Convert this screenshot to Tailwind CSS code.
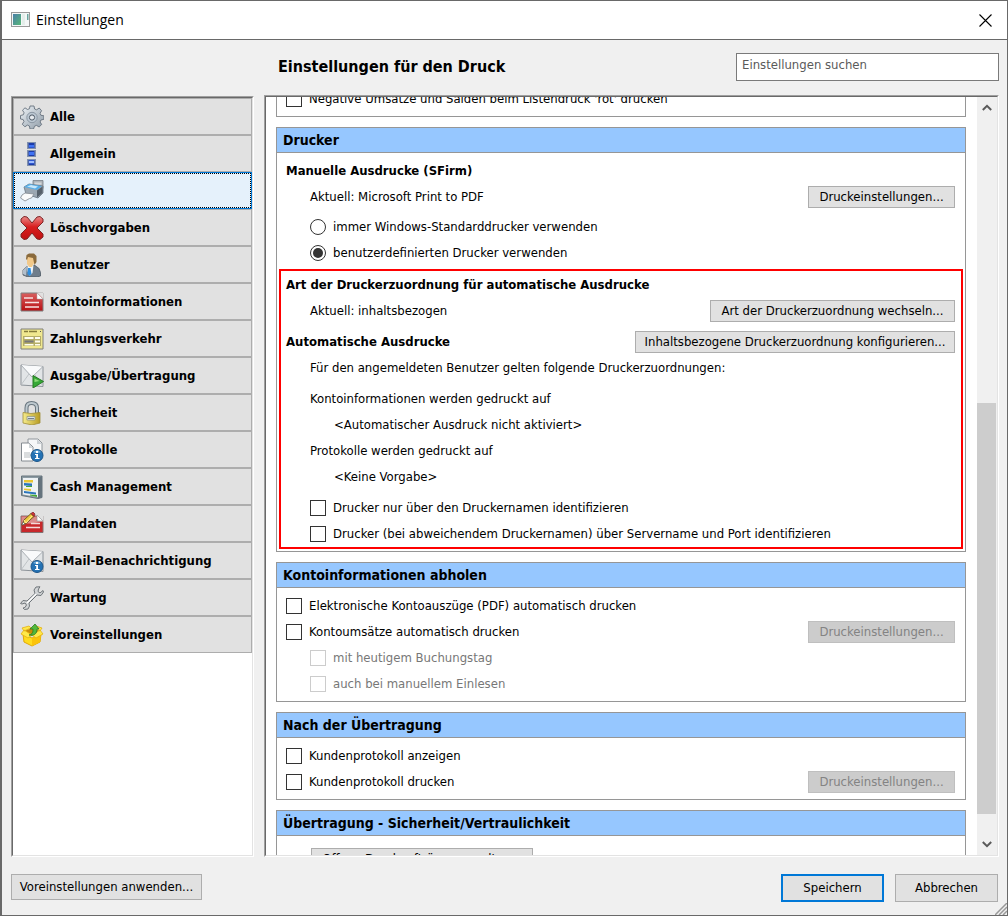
<!DOCTYPE html>
<html lang="de">
<head>
    <meta charset="UTF-8">
    <meta name="viewport" content="width=device-width, initial-scale=1.0">
    <script src="https://cdn.jsdelivr.net/npm/@tailwindcss/browser@4"></script>
    <title>Einstellungen</title>
</head>
<body class="h-screen bg-[#f0f0f0] font-['DejaVu_Sans_Condensed','DejaVu_Sans',sans-serif] text-[13px] text-black">
<div class="flex h-full flex-col overflow-hidden border border-[#696969] border-l-2 relative">

    <!-- Title bar -->
    <header class="flex h-[39px] shrink-0 items-center border-b border-[#696969] bg-white pl-[9px] pr-[15px]">
        <svg class="h-4 w-5" viewBox="0 0 20 16">
            <defs><linearGradient id="app" x2="1" y2="1"><stop stop-color="#4a7fa8"/><stop offset="1" stop-color="#58b878"/></linearGradient></defs>
            <rect x=".5" y=".5" width="18" height="14" fill="#f4f7f7" stroke="#9a9a9a"/>
            <rect x="2" y="2" width="8" height="11" fill="url(#app)"/>
            <path d="M11 2h3v11h-3z" fill="#e4eeea"/><path d="M16 2h1.500v6H16z" fill="#6aa6a0"/>
        </svg>
        <h1 class="ml-[5px] grow font-['Open_Sans',sans-serif] text-sm">Einstellungen</h1>
        <button type="button" aria-label="Schließen">
            <svg class="size-[13px]" viewBox="0 0 13 13"><path d="M.5.5l12 12m0-12l-12 12" stroke="#000" stroke-width="1.1"/></svg>
        </button>
    </header>

    <!-- Page title and search -->
    <div class="flex h-[55px] shrink-0 items-center pb-[2px] pl-[276px] pr-2">
        <h2 class="grow text-base font-bold">Einstellungen für den Druck</h2>
        <input type="search" aria-label="Einstellungen suchen" placeholder="Einstellungen suchen" class="h-7 w-[263px] border border-[#7a7a7a] bg-white pb-1 pl-[5px] placeholder:text-[#5a5a5a]">
    </div>

    <div class="flex min-h-0 grow gap-[10px] pl-[9px] pr-2">

        <!-- Categories -->
        <nav class="mt-px w-[243px] shrink-0 border border-t-[#a0a0a0] border-l-[#a0a0a0] border-r-white border-b-white">
            <div class="h-full border border-t-[#696969] border-l-[#696969] border-r-[#e3e3e3] border-b-[#e3e3e3] bg-white">
                <a href="#" class="flex h-[37px] items-center gap-[6px] border border-[#adadad] bg-[#e1e1e1] pl-[6px] font-bold">
                    <svg class="size-6" viewBox="0 0 24 24">
                        <defs><linearGradient id="gear" x2="1" y2="1"><stop stop-color="#eef3f7"/><stop offset="1" stop-color="#8d9aa6"/></linearGradient></defs>
                        <path d="M10 1h4l.6 3 2 .8 2.600-1.800 2.400 2.700-1.500 2.600.8 2 3 .5v3.500l-3 .7-.8 2 1.600 2.500-2.600 2.500-2.600-1.600-2 .8L13.500 24H10l-.6-3-2-.9-2.500 1.700-2.600-2.600L4 16.500l-.9-2L.5 14v-3.500l2.800-.7.8-2L2.500 5.200 5 2.800l2.500 1.700 2-.8z" fill="url(#gear)" stroke="#66727e" stroke-width=".9"/>
                        <circle cx="12" cy="12.500" r="5.200" fill="#bcc8d3" stroke="#8b97a3"/>
                        <circle cx="12" cy="12.500" r="2.600" fill="#e6eaee" stroke="#4f5a66"/>
                    </svg>Alle
                </a>
                <a href="#" class="flex h-[37px] items-center gap-[6px] border border-[#adadad] bg-[#e1e1e1] pl-[6px] font-bold">
                    <svg class="size-6" viewBox="0 0 24 24">
                        <path d="M7 0h9v7H7zM7 8h9v7H7zM7 17h9v7H7z" fill="#8090ae"/>
                        <path d="M8.500 1h6v5h-6zM8.500 9h6v5h-6zM8.500 18h6v5h-6z" fill="#1c3caa"/>
                        <path d="M9 3h5v2.500H9zM9 10h5v3H9zM9 18.500h5v3H9z" fill="#3f73f4"/>
                        <path d="M9 19h5v2H9z" fill="#9ebcff"/>
                    </svg>Allgemein
                </a>
                <a href="#" aria-current="page" class="flex h-[37px] border border-[#0078d7] bg-[#e5f1fb] font-bold">
                    <span class="flex grow items-center gap-[6px] border border-dotted border-black pl-[5px]">
                        <svg class="size-6" viewBox="0 0 24 24">
                            <path d="M13 1.500h10v8l-10 1z" fill="#aeb4ba" stroke="#777f87" stroke-width=".8"/>
                            <path d="M14.500 3.500h7v2l-7 .5z" fill="#d5d9dc"/>
                            <path d="M4 8l5-3 14 2v7l-5 5-12-4z" fill="#9ba7b2" stroke="#687480" stroke-width=".8"/>
                            <path d="M4 8l5-3 13 2-5 4z" fill="#57aee8"/>
                            <path d="M7 7.500l4-1.500 7 1.500-3 2z" fill="#c7e8fb"/>
                            <path d="M17 11.500l5.500-4V14L17 18.500z" fill="#56616c"/>
                            <path d="M5 14l9 1-2.500 4-2 .5L5 22l-4.500-3L2 16z" fill="#fafbfc" stroke="#8a9198" stroke-width=".9"/>
                        </svg>Drucken
                    </span>
                </a>
                <a href="#" class="flex h-[37px] items-center gap-[6px] border border-[#adadad] bg-[#e1e1e1] pl-[6px] font-bold">
                    <svg class="size-6" viewBox="0 0 24 24">
                        <defs><linearGradient id="cross" x2="0" y2="1"><stop stop-color="#e98a88"/><stop offset=".45" stop-color="#d81f20"/><stop offset="1" stop-color="#c01010"/></linearGradient></defs>
                        <path d="M1 3l3-2.500 3 .5 5 6 5-6 3-.5L23 3v3l-6 6 6 6v3l-3 2.500-3-.5-5-6-5 6-3 .5L1 21v-3l6-6-6-6z" fill="url(#cross)" stroke="#7d2426" stroke-linejoin="round"/>
                    </svg>Löschvorgaben
                </a>
                <a href="#" class="flex h-[37px] items-center gap-[6px] border border-[#adadad] bg-[#e1e1e1] pl-[6px] font-bold">
                    <svg class="size-6" viewBox="0 0 24 24">
                        <path d="M3 22v-5l4-3.500 4-1h4l4 3 1.500 4V23l-4 1H8z" fill="#6f7d8b" stroke="#4d5863" stroke-width=".8"/>
                        <path d="M3 21v-4l4-3.500-1 9z" fill="#b3bfcb"/>
                        <path d="M7.500 12h6l-1 8-3 3-2-5z" fill="#eef4f9"/>
                        <path d="M8 15h2.500l1 6-2 2-2-2z" fill="#2f8fe0"/>
                        <path d="M7 3h7v7l-2 4H9l-2-3z" fill="#f2c98a"/>
                        <path d="M6 6l.5-4L9 .5h5L16.500 3v6l-2 3L13 5l-5-1-1 3z" fill="#8a6a3c"/>
                    </svg>Benutzer
                </a>
                <a href="#" class="flex h-[37px] items-center gap-[6px] border border-[#adadad] bg-[#e1e1e1] pl-[6px] font-bold">
                    <svg class="size-6" viewBox="0 0 24 24">
                        <defs><linearGradient id="konto" x2="0" y2="1"><stop stop-color="#d96060"/><stop offset="1" stop-color="#b80e12"/></linearGradient></defs>
                        <path d="M1 3h22v18H1z" fill="url(#konto)" stroke="#7e7e7e"/>
                        <path d="M17 2.500h6.500V9z" fill="#e1e1e1"/><path d="M17 3v6h6z" fill="#fff" stroke="#aaa" stroke-width=".5"/>
                        <path d="M4 8h9M5 12.500h14M5 17h14" stroke="#f6e2e2" stroke-width="1.600"/>
                    </svg>Kontoinformationen
                </a>
                <a href="#" class="flex h-[37px] items-center gap-[6px] border border-[#adadad] bg-[#e1e1e1] pl-[6px] font-bold">
                    <svg class="size-6" viewBox="0 0 24 24">
                        <path d="M1 2h22v20H1z" fill="#f0e88f" stroke="#7e7e78"/>
                        <path d="M4 4.500h4M9 4.500h8" stroke="#857c3c" stroke-width="1.500"/><path d="M20 4.500h1" stroke="#555"/>
                        <path d="M3 9h18v10H3z" fill="#b5ad68"/>
                        <path d="M4.500 10h9v2h-9zM15 10h5v2h-5zM15 13.500h5v2h-5zM4.500 17h9v1.500h-9zM15 17h5v1.500h-5z" fill="#fffef0"/>
                        <path d="M4.500 14.500h9" stroke="#77777a" stroke-width="2"/>
                    </svg>Zahlungsverkehr
                </a>
                <a href="#" class="flex h-[37px] items-center gap-[6px] border border-[#adadad] bg-[#e1e1e1] pl-[6px] font-bold">
                    <svg class="size-6" viewBox="0 0 24 24">
                        <path d="M1 1l22 1.500v20L1 21z" fill="#e2e5e7" stroke="#8c9298"/>
                        <path d="M1 1l11 12L23 2.500" fill="#f9fafb" stroke="#979da3" stroke-width=".8"/>
                        <path d="M1 21l8-11M23 22l-8-11" stroke="#b5babe" stroke-width=".8"/>
                        <path d="M13 11.500l10.500 6L13 24z" fill="#36a936" stroke="#267a22"/>
                        <path d="M14.500 14.500l5 2.500-5 1z" fill="#90dc78"/>
                    </svg>Ausgabe/Übertragung
                </a>
                <a href="#" class="flex h-[37px] items-center gap-[6px] border border-[#adadad] bg-[#e1e1e1] pl-[6px] font-bold">
                    <svg class="size-6" viewBox="0 0 24 24">
                        <defs><linearGradient id="lock" x2="1"><stop stop-color="#f6ec8c"/><stop offset="1" stop-color="#b79c24"/></linearGradient></defs>
                        <path d="M6.500 13V7C6.500 3 9 2 11.500 2s5.500 1 5.500 5v7" fill="none" stroke="#68757e" stroke-width="4"/>
                        <path d="M6.500 13V7C6.500 3 9 2 11.500 2s5.500 1 5.500 5v7" fill="none" stroke="#bec9cf" stroke-width="2"/>
                        <path d="M3 11.500l8 1 9-1V22l-8 2-9-2z" fill="url(#lock)" stroke="#a08e38" stroke-width=".8"/>
                        <path d="M7 15.500h8v3.500H7z" fill="#dbe3e6" stroke="#959a82" stroke-width=".8"/><path d="M8 17.500h6" stroke="#72808b"/>
                    </svg>Sicherheit
                </a>
                <a href="#" class="flex h-[37px] items-center gap-[6px] border border-[#adadad] bg-[#e1e1e1] pl-[6px] font-bold">
                    <svg class="size-6" viewBox="0 0 24 24">
                        <path d="M8 1h10l4 4v13H8z" fill="#f6f7f8" stroke="#90969c"/><path d="M17 1v5h5z" fill="#ccd1d5"/>
                        <path d="M1.500 5H9l4 4v14H1.500z" fill="#fff" stroke="#858b91"/><path d="M9 5v5h4z" fill="#d2d7da"/>
                        <path d="M4 15h6m-6 2h7m-7 2h6" stroke="#b5babd"/>
                        <circle cx="17" cy="17.500" r="6" fill="#2472b4" stroke="#1b5588"/>
                        <path d="M13 14q4-3.500 8 0-3 2-8 0z" fill="#73b0dc"/>
                        <path d="M16 13h2v2h-2zM15 16h3v4h1.500v1H15v-1h1.200v-3H15z" fill="#fff"/>
                    </svg>Protokolle
                </a>
                <a href="#" class="flex h-[37px] items-center gap-[6px] border border-[#adadad] bg-[#e1e1e1] pl-[6px] font-bold">
                    <svg class="size-6" viewBox="0 0 24 24">
                        <path d="M1.500 1h20.500v21.500l-4 1-16.500-3z" fill="#8c9ba3" stroke="#66747c"/>
                        <path d="M3 3h15v19L3 19.500z" fill="#eef2f4"/>
                        <path d="M18 3l4-2v21.500l-4 1z" fill="#65737d"/>
                        <path d="M4 5h9v2.500H4z" fill="#e9c632"/><path d="M4 8l8 .5V11l-8-.5z" fill="#2a75bb"/>
                        <path d="M6 11h6v1H6z" fill="#45a735"/><path d="M4 13.500l7 .5v2l-7-1z" fill="#e9c632"/>
                        <path d="M4 16l12 1.500v2L4 18z" fill="#2a75bb"/><path d="M10 19.500l7 .5v2l-7-1.500z" fill="#45a735"/>
                    </svg>Cash Management
                </a>
                <a href="#" class="flex h-[37px] items-center gap-[6px] border border-[#adadad] bg-[#e1e1e1] pl-[6px] font-bold">
                    <svg class="size-6" viewBox="0 0 24 24">
                        <path d="M1 4h22v16.500H1z" fill="#c8282b" stroke="#827272"/>
                        <path d="M1.500 4.500H23v5l-12 2H1.500z" fill="#dc8b8b"/>
                        <path d="M16 3h7.500v7z" fill="#e1e1e1"/><path d="M17 3v6h6z" fill="#fff" stroke="#999" stroke-width=".7"/>
                        <path d="M11 11.500h9M6 15.500h14" stroke="#f4dada" stroke-width="1.500"/>
                        <path d="M2 13l2-5 7-6.500 3 3-8 7z" fill="#efc83e" stroke="#735d22"/>
                        <path d="M4 8l2 3 6-7" fill="none" stroke="#fff0a0"/>
                        <path d="M11 1.500L13 0l2 2-1 2.500z" fill="#d0363b" stroke="#762024" stroke-width=".7"/>
                        <path d="M2 13l1-3 2 2z" fill="#fff" stroke="#555" stroke-width=".6"/>
                    </svg>Plandaten
                </a>
                <a href="#" class="flex h-[37px] items-center gap-[6px] border border-[#adadad] bg-[#e1e1e1] pl-[6px] font-bold">
                    <svg class="size-6" viewBox="0 0 24 24">
                        <path d="M1 1l22 1.500v20L1 21z" fill="#e2e5e7" stroke="#8c9298"/>
                        <path d="M1 1l11 12L23 2.500" fill="#f9fafb" stroke="#979da3" stroke-width=".8"/>
                        <path d="M1 21l8-11M23 22l-8-11" stroke="#b5babe" stroke-width=".8"/>
                        <circle cx="17" cy="17.500" r="6" fill="#2472b4" stroke="#1b5588"/>
                        <path d="M13 14q4-3.500 8 0-3 2-8 0z" fill="#73b0dc"/>
                        <path d="M16 13h2v2h-2zM15 16h3v4h1.500v1H15v-1h1.200v-3H15z" fill="#fff"/>
                    </svg>E-Mail-Benachrichtigung
                </a>
                <a href="#" class="flex h-[37px] items-center gap-[6px] border border-[#adadad] bg-[#e1e1e1] pl-[6px] font-bold">
                    <svg class="size-6" viewBox="0 0 24 24">
                        <path d="M20 .8l-4 .2-2 3 1 3.500L7 15l-4-.5-2.500 3L2 18l3-1 1.500 2L5 21.500l-2 .5 1.500 1.500L8 23l1.500-3-.5-3 8-8 4 .5L23.500 6l-.5-1.500L20 7l-2-1.500L18.500 3z" fill="#d2d5d7" stroke="#6f757a" stroke-linejoin="round"/>
                        <path d="M7 17l9-9" stroke="#fff" stroke-width="1.200"/>
                    </svg>Wartung
                </a>
                <a href="#" class="flex h-[37px] items-center gap-[6px] border border-[#adadad] bg-[#e1e1e1] pl-[6px] font-bold">
                    <svg class="size-6" viewBox="0 0 24 24">
                        <path d="M3 11l9 4 9-4-1 8-8 4-8-4z" fill="#ffdc1e" stroke="#e0a808"/>
                        <path d="M12 15l9-4-1 8-8 4z" fill="#fbc30a"/>
                        <path d="M4 8l8-3 8 3-8 5z" fill="#c98c08"/>
                        <path d="M4 7L1 11l7 4 4-3zM20 7l3 4-7 4-4-3zM4 8L2 5l7-2 2 2zM20 8l2-3-6-2-2 2z" fill="#ffe94a" stroke="#e5b010" stroke-width=".8"/>
                        <path d="M9 12c4-1 4-3 4-6h-3l5-5 4 5h-2c0 5-3 7-8 6z" fill="#52b83c" stroke="#2b7c25" stroke-width=".8"/>
                    </svg>Voreinstellungen
                </a>
            </div>
        </nav>

        <!-- Settings of the chosen category -->
        <main class="flex min-w-0 grow border border-t-[#a0a0a0] border-l-[#a0a0a0] border-r-white border-b-white">
            <div class="flex min-w-0 grow border border-t-[#696969] border-l-[#696969] border-r-[#e3e3e3] border-b-[#e3e3e3] bg-white">
                <div class="min-w-0 grow overflow-hidden pl-[10px] pr-[11px]">
                    <div class="-mt-[11px] space-y-[10px]">

                        <section class="border border-t-0 border-[#969696] pb-1 pl-[9px]">
                            <label class="flex h-[26px] items-center gap-[7px]"><input type="checkbox" class="size-4 appearance-none border border-[#333] bg-white">Negative Umsätze und Salden beim Listendruck 'rot' drucken</label>
                        </section>

                        <section class="border border-[#969696]">
                            <h3 class="flex h-[25px] items-center border-b border-[#969696] bg-[#96c7ff] pl-[6px] text-sm font-bold">Drucker</h3>
                            <div class="pt-[5px] pr-[10px] pl-[9px]">
                                <h4 class="flex h-[26px] items-center font-bold">Manuelle Ausdrucke (SFirm)</h4>
                                <div class="flex h-[26px] items-center justify-between pl-6">
                                    <p>Aktuell: Microsoft Print to PDF</p>
                                    <button type="button" class="h-[22px] w-[147px] border border-[#adadad] bg-[#e1e1e1]">Druckeinstellungen...</button>
                                </div>
                                <div class="mt-1 pl-6">
                                    <label class="flex h-[26px] items-center gap-[7px]"><input type="radio" name="drucker" class="size-4 appearance-none rounded-full border border-[#333] bg-white bg-clip-content p-[2px] checked:bg-[#333]">immer Windows-Standarddrucker verwenden</label>
                                    <label class="flex h-[26px] items-center gap-[7px]"><input type="radio" name="drucker" checked class="size-4 appearance-none rounded-full border border-[#333] bg-white bg-clip-content p-[2px] checked:bg-[#333]">benutzerdefinierten Drucker verwenden</label>
                                </div>
                            </div>
                            <div class="mx-[2px] mt-[3px] mb-[2px] border-2 border-[#ff0000] pt-px pr-[6px] pl-[5px]">
                                <h4 class="flex h-[26px] items-center font-bold">Art der Druckerzuordnung für automatische Ausdrucke</h4>
                                <div class="flex h-[26px] items-center justify-between pl-6">
                                    <p>Aktuell: inhaltsbezogen</p>
                                    <button type="button" class="h-[22px] w-[245px] border border-[#adadad] bg-[#e1e1e1]">Art der Druckerzuordnung wechseln...</button>
                                </div>
                                <div class="mt-[5px] flex h-[26px] items-center justify-between">
                                    <h4 class="font-bold">Automatische Ausdrucke</h4>
                                    <button type="button" class="h-[22px] w-[320px] border border-[#adadad] bg-[#e1e1e1] whitespace-nowrap">Inhaltsbezogene Druckerzuordnung konfigurieren...</button>
                                </div>
                                <div class="pl-6 leading-[26px]">
                                    <p>Für den angemeldeten Benutzer gelten folgende Druckerzuordnungen:</p>
                                    <dl class="mt-[5px]">
                                        <dt>Kontoinformationen werden gedruckt auf</dt>
                                        <dd class="pl-6">&lt;Automatischer Ausdruck nicht aktiviert&gt;</dd>
                                        <dt>Protokolle werden gedruckt auf</dt>
                                        <dd class="pl-6">&lt;Keine Vorgabe&gt;</dd>
                                    </dl>
                                </div>
                                <div class="mt-[5px] pl-6">
                                    <label class="flex h-[26px] items-center gap-[7px]"><input type="checkbox" class="size-4 appearance-none border border-[#333] bg-white">Drucker nur über den Druckernamen identifizieren</label>
                                    <label class="flex h-[26px] items-center gap-[7px]"><input type="checkbox" class="size-4 appearance-none border border-[#333] bg-white">Drucker (bei abweichendem Druckernamen) über Servername und Port identifizieren</label>
                                </div>
                            </div>
                        </section>

                        <section class="border border-[#969696]">
                            <h3 class="flex h-[25px] items-center border-b border-[#969696] bg-[#96c7ff] pl-[6px] text-sm font-bold">Kontoinformationen abholen</h3>
                            <div class="pt-[5px] pr-[10px] pb-1 pl-[9px]">
                                <label class="flex h-[26px] items-center gap-[7px]"><input type="checkbox" class="size-4 appearance-none border border-[#333] bg-white">Elektronische Kontoauszüge (PDF) automatisch drucken</label>
                                <div class="flex h-[26px] items-center justify-between">
                                    <label class="flex items-center gap-[7px]"><input type="checkbox" class="size-4 appearance-none border border-[#333] bg-white">Kontoumsätze automatisch drucken</label>
                                    <button type="button" disabled class="h-[22px] w-[147px] border border-[#bfbfbf] bg-[#cccccc] text-[#838383]">Druckeinstellungen...</button>
                                </div>
                                <div class="pl-6 text-[#777]">
                                    <label class="flex h-[26px] items-center gap-[7px]"><input type="checkbox" disabled class="size-4 appearance-none border border-[#ccc] bg-white">mit heutigem Buchungstag</label>
                                    <label class="flex h-[26px] items-center gap-[7px]"><input type="checkbox" disabled class="size-4 appearance-none border border-[#ccc] bg-white">auch bei manuellem Einlesen</label>
                                </div>
                            </div>
                        </section>

                        <section class="border border-[#969696]">
                            <h3 class="flex h-[25px] items-center border-b border-[#969696] bg-[#96c7ff] pl-[6px] text-sm font-bold">Nach der Übertragung</h3>
                            <div class="pt-[5px] pr-[10px] pb-1 pl-[9px]">
                                <label class="flex h-[26px] items-center gap-[7px]"><input type="checkbox" class="size-4 appearance-none border border-[#333] bg-white">Kundenprotokoll anzeigen</label>
                                <div class="flex h-[26px] items-center justify-between">
                                    <label class="flex items-center gap-[7px]"><input type="checkbox" class="size-4 appearance-none border border-[#333] bg-white">Kundenprotokoll drucken</label>
                                    <button type="button" disabled class="h-[22px] w-[147px] border border-[#bfbfbf] bg-[#cccccc] text-[#838383]">Druckeinstellungen...</button>
                                </div>
                            </div>
                        </section>

                        <section class="border border-[#969696]">
                            <h3 class="flex h-[25px] items-center border-b border-[#969696] bg-[#96c7ff] pl-[6px] text-sm font-bold">Übertragung - Sicherheit/Vertraulichkeit</h3>
                            <div class="py-3 pl-[34px]">
                                <button type="button" class="h-[22px] w-[222px] border border-[#adadad] bg-[#e1e1e1] whitespace-nowrap">Offene Druckaufträge verwalten...</button>
                            </div>
                        </section>
                    </div>
                </div>

                <!-- Scroll bar -->
                <div class="flex w-5 shrink-0 flex-col items-center bg-[#f0f0f0]">
                    <svg class="my-[7px] h-[7px] w-[10px] shrink-0" viewBox="0 0 10 7"><path d="M.8 6L5 1.800 9.200 6" fill="none" stroke="#5a5a5a" stroke-width="2"/></svg>
                    <div class="grow-[285]"></div>
                    <div class="w-full grow-[410] border-r border-[#f0f0f0] bg-[#cdcdcd]"></div>
                    <div class="grow-[20]"></div>
                    <svg class="my-[7px] h-[7px] w-[10px] shrink-0" viewBox="0 0 10 7"><path d="M.8 1L5 5.200 9.200 1" fill="none" stroke="#5a5a5a" stroke-width="2"/></svg>
                </div>
            </div>
        </main>
    </div>

    <!-- Dialog buttons -->
    <footer class="flex shrink-0 items-start gap-[11px] pt-[17px] pr-[9px] pb-[13px] pl-[9px]">
        <button type="button" class="h-[26px] w-[191px] border border-[#adadad] bg-[#e1e1e1]">Voreinstellungen anwenden...</button>
        <button type="submit" class="ml-auto h-7 w-[103px] border-2 border-[#0078d7] bg-[#e1e1e1]">Speichern</button>
        <button type="button" class="h-7 w-[103px] border border-[#adadad] bg-[#e1e1e1]">Abbrechen</button>
    </footer>
    <svg class="absolute right-0 bottom-0 size-3" viewBox="0 0 12 12"><path d="M0 12L12 0M4 12l8-8M8 12l4-4" stroke="#999" stroke-width="1.500"/></svg>
</div>
</body>
</html>
